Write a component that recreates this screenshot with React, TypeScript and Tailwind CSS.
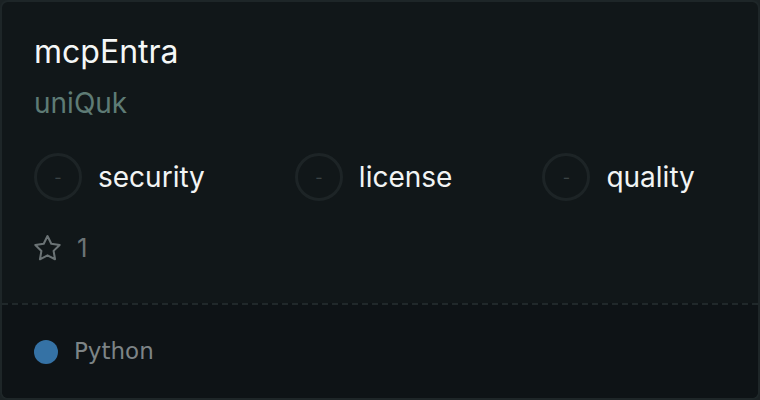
import React from "react";

function Metric({ label }: { label: string }) {
  return (
    <div className="flex items-center gap-4">
      <div className="w-[48px] h-[48px] rounded-full border-[3px] border-[#1d2426] flex items-center justify-center text-[#3b4345] text-[16px] leading-none">
        -
      </div>
      <span className="text-[28px] text-[#f2f4f4] leading-none">{label}</span>
    </div>
  );
}

export default function App() {
  return (
    <div className="w-[760px] h-[400px] bg-[#1b2224]">
      <div
        className="w-[760px] h-[400px] rounded-[8px] border-[2px] border-[#1e2628] bg-[#111719] overflow-hidden flex flex-col"
        style={{ fontFamily: "Inter, 'Noto Sans', sans-serif" }}
      >
        <div className="flex-1 flex flex-col pl-[32px] pt-[30px]">
          <div className="text-[32px] leading-[40px] text-[#f5f7f7]">mcpEntra</div>
          <div className="text-[28px] leading-[36px] mt-[13px] text-[#5e7b75]">uniQuk</div>
          <div className="flex items-center gap-[90px] mt-[32px]">
            <Metric label="security" />
            <Metric label="license" />
            <Metric label="quality" />
          </div>
          <div className="flex items-center gap-[16px] mt-[33px] text-[#6b7375]">
            <svg width="27" height="27" viewBox="1.8 1.8 20.4 20.4" fill="none" stroke="currentColor" strokeWidth="1.55" strokeLinejoin="round">
              <path d="M12 2.6l2.85 5.8 6.35.92-4.6 4.48 1.1 6.33L12 17.15l-5.7 3 1.1-6.33L2.8 9.32l6.35-.92z" />
            </svg>
            <span className="text-[26px] leading-[28px]">1</span>
          </div>
        </div>
        <div className="h-[95px] border-t-[2px] border-dashed border-[#20282a] bg-[#0e1316] flex items-center pl-[32px] gap-[16px]">
          <div className="w-[24px] h-[24px] rounded-full bg-[#3572a5]" />
          <span className="text-[23px] text-[#7d8486]" style={{ fontFamily: "'DejaVu Sans', sans-serif" }}>Python</span>
        </div>
      </div>
    </div>
  );
}
